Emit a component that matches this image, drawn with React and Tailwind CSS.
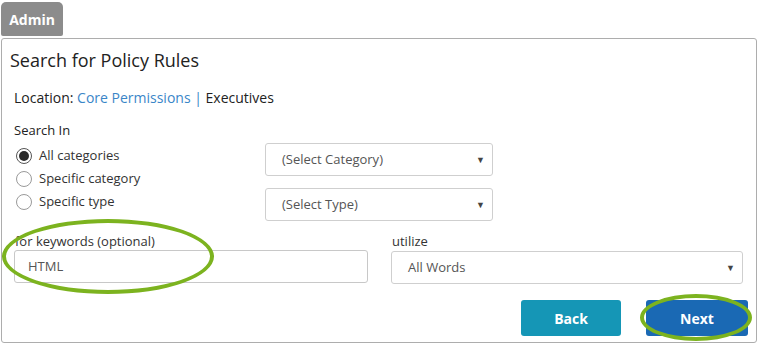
import React from 'react';

function Radio({ checked, label }) {
    return (
        <div className="flex items-center h-[23px]">
            <span className={`w-[16px] h-[16px] rounded-full border flex items-center justify-center ${checked ? 'border-[#555]' : 'border-[#9a9a9a]'}`}>
                {checked && <span className="w-[10px] h-[10px] rounded-full bg-[#2b2b2b]" />}
            </span>
            <span className="ml-[7px] text-[13px] text-[#333]">{label}</span>
        </div>
    );
}

function Select({ value, className }) {
    return (
        <div className={`h-[33px] border border-[#cfcfcf] rounded-[3px] bg-white flex items-center justify-between pl-[16px] pr-[7px] text-[13px] text-[#555] ${className}`}>
            <span>{value}</span>
            <span className="text-[9px] text-[#444]">▼</span>
        </div>
    );
}

export default function App() {
    return (
        <div className="relative w-[760px] h-[349px] bg-white pl-px pt-[2px] font-['Open_Sans',sans-serif] text-[#333]">
            {/* Tab */}
            <div className="w-[62px] h-[34px] bg-[#8c8c8c] rounded-t-[5px] rounded-b-[2px] flex items-center justify-center text-white font-bold text-[14px]">
                Admin
            </div>

            {/* Panel */}
            <div className="mt-[2px] w-[756px] h-[305px] border border-[#adadad] rounded-[3px]">
                <h1 className="pt-[9px] pl-[8px] text-[18px] leading-[24px] text-[#222]">Search for Policy Rules</h1>

                <div className="mt-[16px] pl-[12px] text-[14px] leading-[20px] text-[#222]">
                    Location: <span className="text-[#3a86c8]">Core Permissions</span> <span className="text-[#3a86c8]">|</span> Executives
                </div>

                <div className="flex pl-[12px] mt-[13px]">
                    <div className="w-[251px]">
                        <div className="text-[13px] leading-[18px] text-[#222]">Search In</div>
                        <div className="mt-[5px] pl-[2px]">
                            <Radio checked label="All categories" />
                            <Radio label="Specific category" />
                            <Radio label="Specific type" />
                        </div>
                    </div>
                    <div className="pt-[22px] flex flex-col gap-[12px]">
                        <Select value="(Select Category)" className="w-[228px]" />
                        <Select value="(Select Type)" className="w-[228px]" />
                    </div>
                </div>

                <div className="flex pl-[12px] mt-[11px]">
                    <div className="w-[354px]">
                        <div className="text-[13px] leading-[18px] pl-px">for keywords (optional)</div>
                        <div className="h-[33px] border border-[#c8c8c8] rounded-[3px] flex items-center pl-[13px] text-[13px] text-[#555]">HTML</div>
                    </div>
                    <div className="ml-[23px] w-[352px]">
                        <div className="text-[13px] leading-[18px] pl-px">utilize</div>
                        <Select value="All Words" className="mt-px w-[352px]" />
                    </div>
                </div>

                <div className="flex justify-end gap-[25px] mt-[16px] pr-[8px]">
                    <button className="w-[100px] h-[36px] bg-[#1596b6] rounded-[3px] text-white font-bold text-[14px]">Back</button>
                    <button className="w-[102px] h-[36px] bg-[#1a69b4] rounded-[3px] text-white font-bold text-[14px]">Next</button>
                </div>
            </div>

            {/* Highlight annotations */}
            <div className="absolute left-[2px] top-[219px] w-[212px] h-[75px] rounded-[50%] border-[4px] border-[#7cb31f]" />
            <div className="absolute left-[640px] top-[294px] w-[112px] h-[47px] rounded-[50%] border-[4px] border-[#7cb31f]" />
        </div>
    );
}
